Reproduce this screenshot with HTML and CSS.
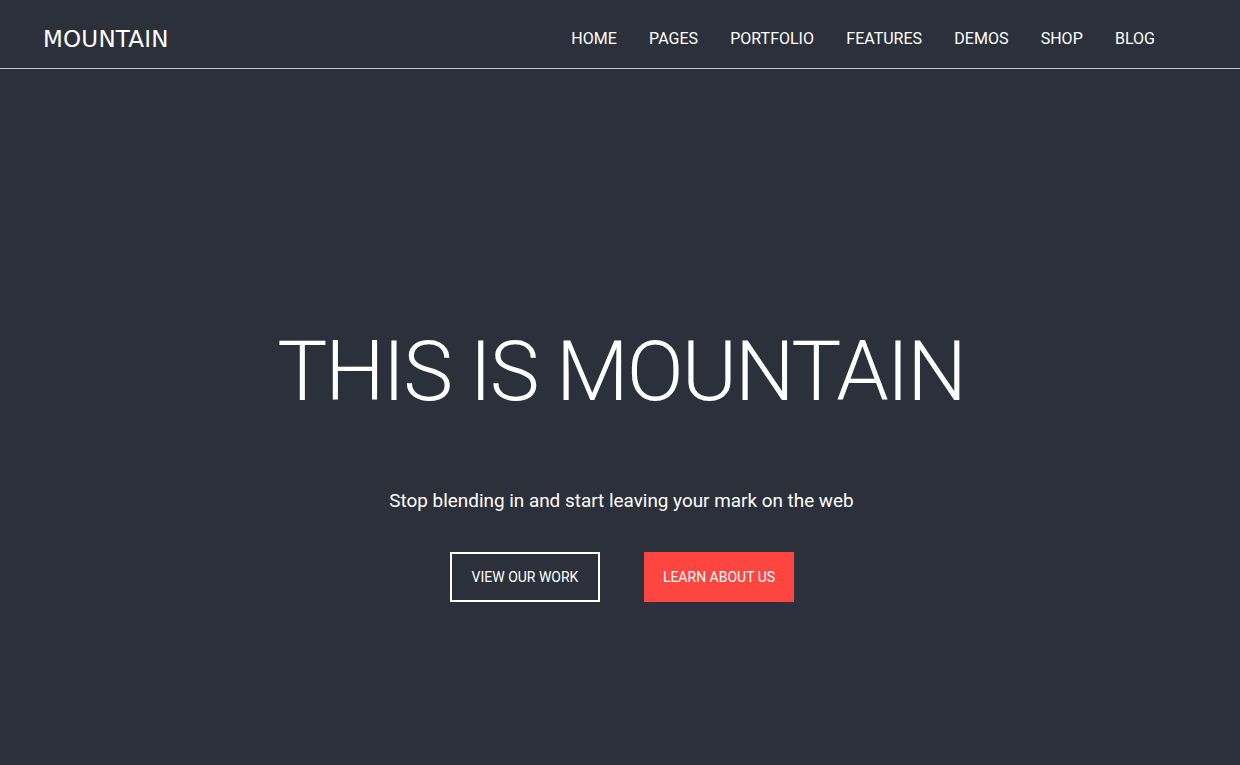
FILE: index.html
```
<!DOCTYPE html>
<html>
<head>
<meta charset="utf-8">
<link rel="stylesheet" href="styles.css">
</head>
<body>
<header class="topbar">
  <div class="logo">MOUNTAIN</div>
  <nav class="nav">
    <a href="#">HOME</a>
    <a href="#">PAGES</a>
    <a href="#">PORTFOLIO</a>
    <a href="#">FEATURES</a>
    <a href="#">DEMOS</a>
    <a href="#">SHOP</a>
    <a href="#">BLOG</a>
  </nav>
</header>
<section class="hero">
  <h1 class="title">THIS IS MOUNTAIN</h1>
  <p class="subtitle">Stop blending in and start leaving your mark on the web</p>
  <div class="actions">
    <a href="#" class="btn btn-outline">VIEW OUR WORK</a>
    <a href="#" class="btn btn-solid">LEARN ABOUT US</a>
  </div>
</section>
</body>
</html>
```
FILE: styles.css
```
html, body {
  margin: 0;
  padding: 0;
  background: #2c303b;
  color: #fff;
  height: 100%;
}
body {
  font-family: Roboto, "Liberation Sans", sans-serif;
  overflow: hidden;
}
.topbar {
  box-sizing: border-box;
  height: 69px;
  border-bottom: 1px solid #c9c9c9;
  display: flex;
  align-items: center;
  justify-content: space-between;
  padding: 9px 85px 0 43px;
}
.logo {
  font-family: "DejaVu Sans", sans-serif;
  font-size: 23px;
  letter-spacing: 0.2px;
}
.nav {
  display: flex;
  gap: 32.3px;
}
.nav a {
  color: #fff;
  text-decoration: none;
  font-size: 16px;
}
.hero {
  display: flex;
  flex-direction: column;
  align-items: center;
  padding-top: 261px;
}
.title {
  margin: 0;
  font-weight: 300;
  font-size: 84px;
  line-height: 1;
  letter-spacing: -2px;
  padding-left: 2px;
}
.subtitle {
  margin: 75px 0 0;
  font-size: 18.9px;
  line-height: 24px;
  padding-left: 3px;
}
.actions {
  display: flex;
  gap: 44px;
  margin-top: 39px;
  margin-left: 4px;
}
.btn {
  box-sizing: border-box;
  width: 150px;
  height: 50px;
  display: flex;
  align-items: center;
  justify-content: center;
  color: #fff;
  text-decoration: none;
  font-size: 14px;
}
.btn-outline {
  border: 2px solid #fff;
}
.btn-solid {
  background: #ff4540;
}
```
